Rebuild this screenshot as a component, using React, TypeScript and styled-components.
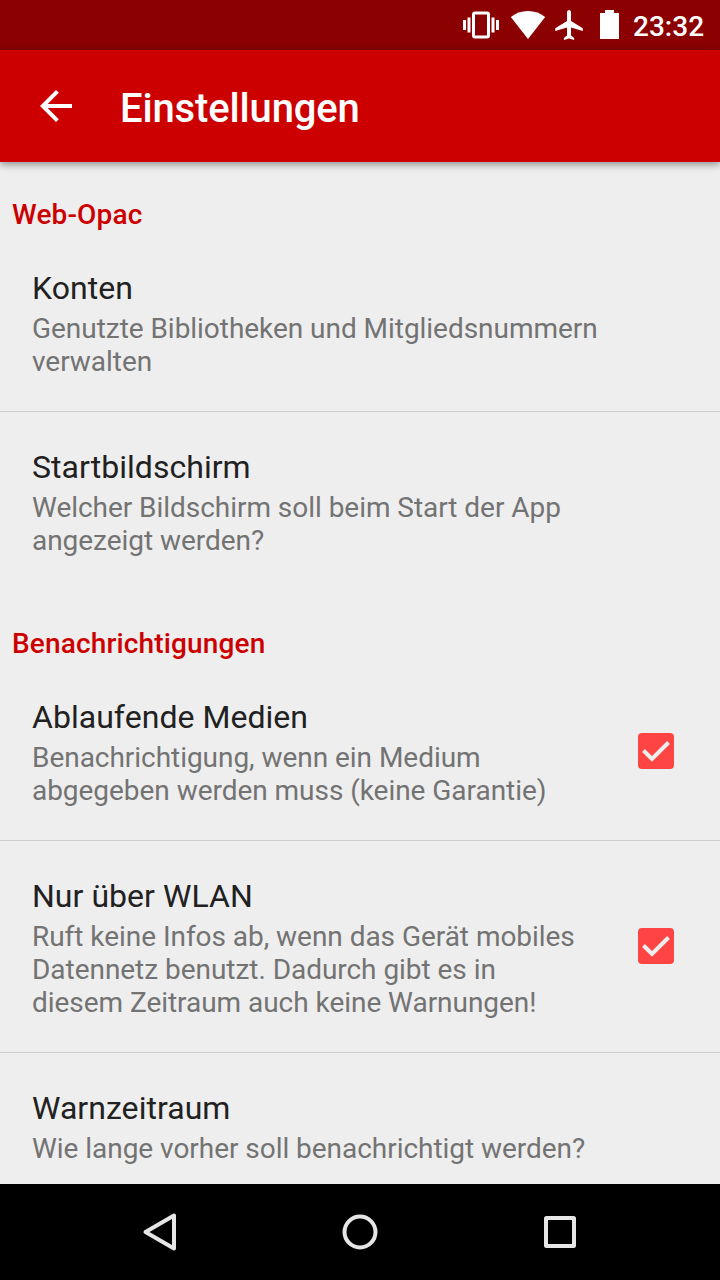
import React from "react";
import styled, { createGlobalStyle } from "styled-components";

const GlobalStyle = createGlobalStyle`
  * { box-sizing: border-box; }
  body { margin: 0; background: #eeeeee; font-family: Roboto, "Liberation Sans", sans-serif; }
`;

const Screen = styled.div`
  display: flex;
  flex-direction: column;
  width: 720px;
  height: 1280px;
  overflow: hidden;
  background: #eeeeee;
`;

const StatusBar = styled.div`
  display: flex;
  flex: none;
  height: 50px;
  padding-right: 16px;
  justify-content: flex-end;
  align-items: flex-start;
  background: #8b0000;
  color: #fff;
`;

const StatusIcons = styled.svg`
  display: block;
  width: 170px;
  height: 50px;
`;

const Clock = styled.time`
  width: 71px;
  padding-top: 10px;
  font-size: 28px;
  font-weight: 500;
  line-height: 33px;
  white-space: nowrap;
`;

const Toolbar = styled.header`
  display: flex;
  flex: none;
  align-items: center;
  height: 112px;
  padding-left: 32px;
  gap: 40px;
  background: #cc0000;
  box-shadow: 0 2px 8px rgba(0, 0, 0, 0.45);
  z-index: 1;
`;

const BackIcon = styled.svg`
  width: 48px;
  height: 48px;
`;

const Title = styled.h1`
  margin: 6px 0 0;
  color: #fff;
  font-size: 40px;
  font-weight: 500;
  letter-spacing: -0.15px;
  line-height: 48px;
`;

const Content = styled.main`
  flex: 1;
  min-height: 0;
  overflow: hidden;
`;

const Category = styled.h2<{ $spaced?: boolean }>`
  margin: 0;
  padding: ${(p) => (p.$spaced ? "37px" : "36px")} 12px 2px;
  color: #cc0000;
  font-size: 28px;
  font-weight: 500;
  letter-spacing: 0.15px;
  line-height: 33px;
`;

const Row = styled.div<{ $divider?: boolean }>`
  display: flex;
  align-items: center;
  padding-left: 32px;
  padding-right: 46px;
  border-bottom: ${(p) => (p.$divider ? "1px solid #cccccc" : "none")};
`;

const RowText = styled.div<{ $narrow: boolean }>`
  width: ${(p) => (p.$narrow ? "546px" : "600px")};
  padding: 36px 0 33px;
`;

const RowTitle = styled.div`
  margin-bottom: 5px;
  color: #212121;
  font-size: 32px;
  letter-spacing: 0.04px;
  line-height: 38px;
`;

const Summary = styled.div`
  color: #737373;
  font-size: 28px;
  letter-spacing: -0.04px;
  line-height: 33px;
`;

const CheckIcon = styled.svg`
  display: block;
  width: 36px;
  height: 36px;
  margin-left: auto;
  margin-bottom: 1px;
`;

const NavBar = styled.nav`
  display: flex;
  flex: none;
  height: 96px;
  align-items: center;
  justify-content: center;
  gap: 152px;
  background: #000;
`;

const NavIcon = styled.svg`
  width: 48px;
  height: 48px;
  fill: none;
  stroke: #e6e6e6;
  stroke-width: 4;
  stroke-linejoin: round;
`;

type Setting = { title: string; summary: string; checked?: boolean };

const sections: { name: string; items: Setting[] }[] = [
  {
    name: "Web-Opac",
    items: [
      { title: "Konten", summary: "Genutzte Bibliotheken und Mitgliedsnummern verwalten" },
      { title: "Startbildschirm", summary: "Welcher Bildschirm soll beim Start der App angezeigt werden?" },
    ],
  },
  {
    name: "Benachrichtigungen",
    items: [
      {
        title: "Ablaufende Medien",
        summary: "Benachrichtigung, wenn ein Medium abgegeben werden muss (keine Garantie)",
        checked: true,
      },
      {
        title: "Nur über WLAN",
        summary:
          "Ruft keine Infos ab, wenn das Gerät mobiles Datennetz benutzt. Dadurch gibt es in diesem Zeitraum auch keine Warnungen!",
        checked: true,
      },
      { title: "Warnzeitraum", summary: "Wie lange vorher soll benachrichtigt werden?" },
    ],
  },
];

function SettingRow({ item, divider }: { item: Setting; divider: boolean }) {
  return (
    <Row $divider={divider}>
      <RowText $narrow={!!item.checked}>
        <RowTitle>{item.title}</RowTitle>
        <Summary>{item.summary}</Summary>
      </RowText>
      {item.checked && (
        <CheckIcon viewBox="0 0 36 36">
          <rect width="36" height="36" rx="4" fill="#ff4444" />
          <path d="M5.5 17.5 14 26 30.5 9.5" fill="none" stroke="#eeeeee" strokeWidth="4" />
        </CheckIcon>
      )}
    </Row>
  );
}

export default function App() {
  return (
    <Screen>
      <GlobalStyle />
      <StatusBar>
        <StatusIcons viewBox="463 0 170 50" fill="#fff">
          <rect x="473.5" y="13" width="15" height="24" rx="1.5" fill="none" stroke="#fff" strokeWidth="3" />
          <path d="M463 20h3v10h-3zM467.5 17.5h3v15h-3zM491.5 17.5h3v15h-3zM496 20h3v10h-3z" />
          <path d="M510.8 17Q518 11 528 11T545.2 17L528 39Z" />
          <path
            transform="translate(552.7 8.6) scale(1.42 1.45)"
            d="M21.2 15.5v-1.9l-8.3-5V2.5C12.9 1.7 12.3 1 11.5 1S10.1 1.7 10.1 2.5v6.1l-8.3 5v1.900l8.300-2.500v5.500l-2.200 1.700V21.700l3.600-1 3.600 1V20.200l-2.200-1.700V13z"
          />
          <path d="M605 10h9v3h5v26h-19V13h5z" />
        </StatusIcons>
        <Clock>23:32</Clock>
      </StatusBar>
      <Toolbar>
        <BackIcon viewBox="0 0 24 24" fill="#fff">
          <path d="M20 11H7.830l5.590-5.590L12 4l-8 8 8 8 1.410-1.410L7.830 13H20z" />
        </BackIcon>
        <Title>Einstellungen</Title>
      </Toolbar>
      <Content>
        {sections.map((section, s) => (
          <section key={section.name}>
            <Category $spaced={s > 0}>{section.name}</Category>
            {section.items.map((item, i) => (
              <SettingRow key={item.title} item={item} divider={i < section.items.length - 1} />
            ))}
          </section>
        ))}
      </Content>
      <NavBar>
        <NavIcon viewBox="0 0 48 48">
          <path d="M9.500 24 38 7.500V40.500Z" />
        </NavIcon>
        <NavIcon viewBox="0 0 48 48">
          <circle cx="24" cy="24" r="15.500" />
        </NavIcon>
        <NavIcon viewBox="0 0 48 48">
          <rect x="10" y="10" width="28" height="28" rx="0.500" />
        </NavIcon>
      </NavBar>
    </Screen>
  );
}
